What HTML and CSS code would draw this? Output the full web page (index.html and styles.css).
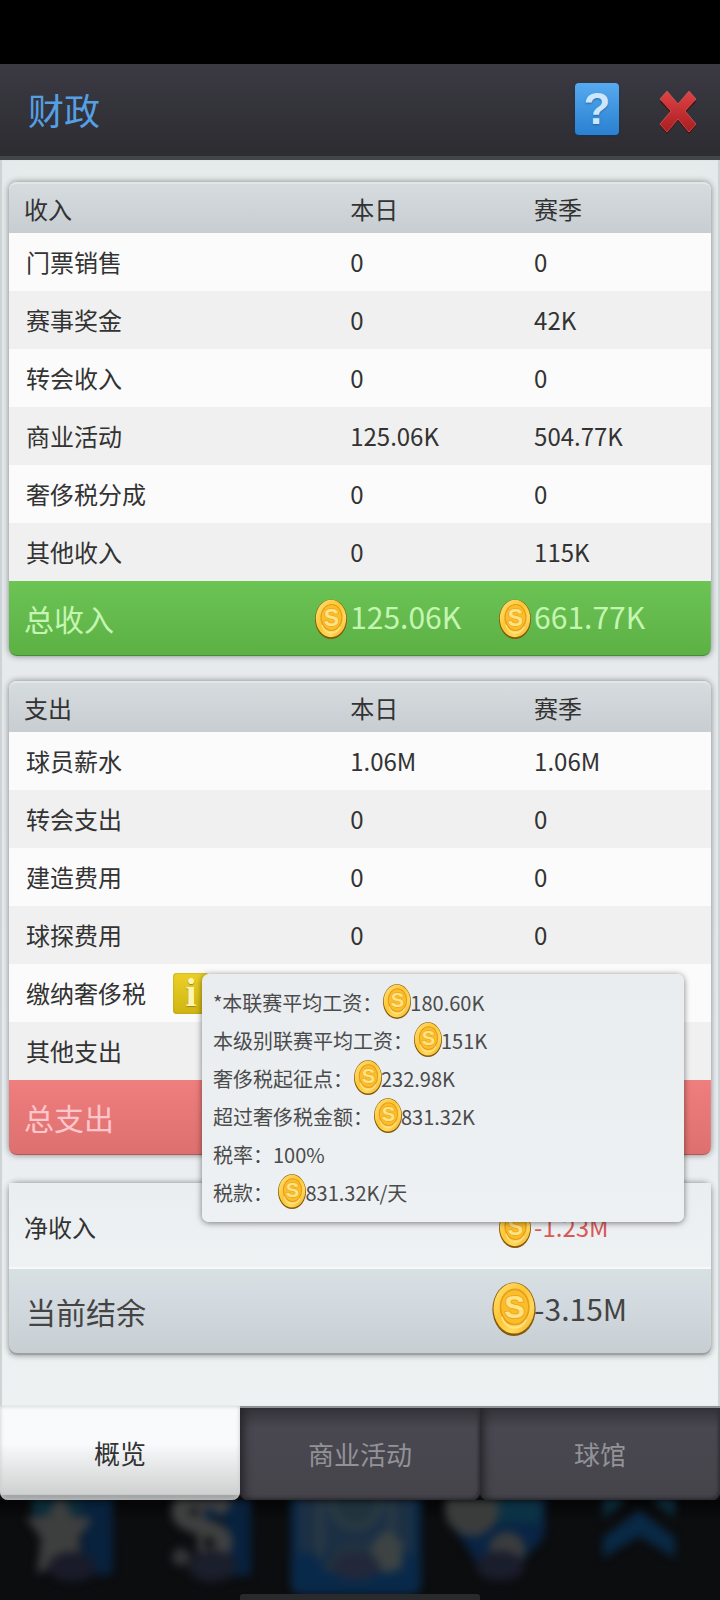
FILE: index.html
```html
<!DOCTYPE html>
<html lang="zh-CN">
<head>
	<meta charset="utf-8">
	<meta name="viewport" content="width=device-width, initial-scale=1">
	<title>财政</title>
	<link rel="stylesheet" href="styles.css">
</head>
<body>
	<!-- shared icons -->
	<svg class="defs" width="0" height="0" aria-hidden="true">
		<defs>
			<linearGradient id="gold" x1="0" y1="0" x2="1" y2="1">
				<stop offset="0" stop-color="#ffe07a"/>
				<stop offset="0.45" stop-color="#fdc632"/>
				<stop offset="0.7" stop-color="#ffd95c"/>
				<stop offset="1" stop-color="#f2a71c"/>
			</linearGradient>
			<linearGradient id="red" x1="0" y1="0" x2="0" y2="1">
				<stop offset="0" stop-color="#e04345"/>
				<stop offset="1" stop-color="#a81d20"/>
			</linearGradient>
			<symbol id="coin" viewBox="0 0 32 40">
				<ellipse cx="16" cy="20.2" rx="16" ry="19.8" fill="#86590a"/>
				<ellipse cx="16" cy="19.5" rx="15.2" ry="18.7" fill="url(#gold)"/>
				<ellipse cx="16.5" cy="18.5" rx="10.5" ry="13" fill="#fcbd2b" stroke="#e59d1c" stroke-width="1.2"/>
				<path d="M7 26a10 12 0 0 0 18 2" fill="none" stroke="#ffe489" stroke-width="1.2"/>
				<text class="coin-letter" x="16.5" y="26.5" text-anchor="middle">S</text>
			</symbol>
		</defs>
	</svg>

	<!-- title bar -->
	<header class="banner">
		<h1>财政</h1>
		<button class="help" type="button" aria-label="帮助">?</button>
		<button class="close" type="button" aria-label="关闭">
			<svg width="38" height="46" viewBox="0 0 38 46">
				<path d="M8 5l11 12L30 5l7 8-11 11 11 13-7 8-11-13L8 45l-7-8 11-13L1 13z" fill="#4e1013"/>
				<path d="M8 2l11 13L30 2l7 8-11 12 11 13-7 8-11-13L8 43l-7-8 11-13L1 10z" fill="url(#red)" stroke="#c9595a" stroke-width="0.8"/>
			</svg>
		</button>
	</header>

	<main class="content">
		<!-- income -->
		<table class="card income">
			<thead>
				<tr><th>收入</th><th>本日</th><th>赛季</th></tr>
			</thead>
			<tbody>
				<tr><td>门票销售</td><td>0</td><td>0</td></tr>
				<tr><td>赛事奖金</td><td>0</td><td>42K</td></tr>
				<tr><td>转会收入</td><td>0</td><td>0</td></tr>
				<tr><td>商业活动</td><td>125.06K</td><td>504.77K</td></tr>
				<tr><td>奢侈税分成</td><td>0</td><td>0</td></tr>
				<tr><td>其他收入</td><td>0</td><td>115K</td></tr>
			</tbody>
			<tfoot>
				<tr>
					<td>总收入</td>
					<td><svg class="coin"><use href="#coin"/></svg>125.06K</td>
					<td><svg class="coin"><use href="#coin"/></svg>661.77K</td>
				</tr>
			</tfoot>
		</table>

		<!-- expenses -->
		<table class="card expense">
			<thead>
				<tr><th>支出</th><th>本日</th><th>赛季</th></tr>
			</thead>
			<tbody>
				<tr><td>球员薪水</td><td>1.06M</td><td>1.06M</td></tr>
				<tr><td>转会支出</td><td>0</td><td>0</td></tr>
				<tr><td>建造费用</td><td>0</td><td>0</td></tr>
				<tr><td>球探费用</td><td>0</td><td>0</td></tr>
				<tr>
					<td>
						<div class="tax">
							缴纳奢侈税
							<button class="info" type="button" aria-label="奢侈税说明" aria-describedby="tax-tip">i</button>
							<div class="tooltip" id="tax-tip" role="tooltip">
								<p>*本联赛平均工资：<svg class="coin"><use href="#coin"/></svg>180.60K</p>
								<p>本级别联赛平均工资：<svg class="coin"><use href="#coin"/></svg>151K</p>
								<p>奢侈税起征点：<svg class="coin"><use href="#coin"/></svg>232.98K</p>
								<p>超过奢侈税金额：<svg class="coin"><use href="#coin"/></svg>831.32K</p>
								<p>税率：100%</p>
								<p>税款： <svg class="coin"><use href="#coin"/></svg>831.32K/天</p>
							</div>
						</div>
					</td>
					<td></td><td></td>
				</tr>
				<tr><td>其他支出</td><td></td><td></td></tr>
			</tbody>
			<tfoot>
				<tr><td>总支出</td><td></td><td></td></tr>
			</tfoot>
		</table>

		<!-- balance -->
		<table class="card balance">
			<tbody>
				<tr class="net">
					<th>净收入</th><td></td>
					<td><svg class="coin"><use href="#coin"/></svg>-1.23M</td>
				</tr>
				<tr class="total">
					<th>当前结余</th><td></td>
					<td><svg class="coin"><use href="#coin"/></svg>-3.15M</td>
				</tr>
			</tbody>
		</table>
	</main>

	<nav class="tabs">
		<button class="tab active" type="button">概览</button>
		<button class="tab" type="button">商业活动</button>
		<button class="tab" type="button">球馆</button>
	</nav>

	<!-- dimmed game menu behind the window -->
	<div class="dock" aria-hidden="true">
		<svg viewBox="0 0 144 100">
			<path d="M32 0h81v70q0 5-5 5H82V20H32z" fill="#08213d"/>
			<path d="M32 0h50v14H32z" fill="#0c2c38"/>
			<path d="M60-6l13 22 20 2-14 20 4 34-22-10-24 12 4-36-15-20 22-3z" fill="#3d3e3e"/>
			<ellipse cx="72" cy="67" rx="24" ry="15" fill="#191b29"/>
		</svg>
		<svg viewBox="0 0 144 100">
			<path d="M60 0h47v72q0 4-4 4H80V20H60z" fill="#08213d"/>
			<path d="M83 10C65-8 34-1 36 13c2 15 42 12 44 28 0 12-12 18-24 14" fill="none" stroke="#3f4040" stroke-width="17"/>
			<path d="M57-5v60" stroke="#3f4040" stroke-width="7"/>
			<circle cx="37" cy="57" r="9" fill="#343538"/>
			<ellipse cx="68" cy="66" rx="24" ry="16" fill="#1b1e2b"/>
		</svg>
		<svg viewBox="0 0 144 100">
			<path d="M3-5h130v88q0 12-12 12H15Q3 95 3 83z" fill="#09294a"/>
			<path d="M10-5h116v58H10z" fill="#1c3044"/>
			<path d="M32-5v65M104-5v65" stroke="#323d43" stroke-width="5"/>
			<circle cx="68" cy="2" r="25" fill="#20343f" stroke="#354044" stroke-width="4"/>
			<path d="M36 62q32-38 64 0v10H36z" fill="#22333e"/>
			<path d="M98 30l16 12v26l-16 5-14-12V44z" fill="#3d4343"/>
			<ellipse cx="68" cy="66" rx="24" ry="14" fill="#22283a"/>
		</svg>
		<svg viewBox="0 0 144 100">
			<path d="M20-5h93v32q0 14-14 24L82 70 52 76 36 48 20 26z" fill="#092444"/>
			<path d="M64-5h45v28H64z" fill="#0b3244"/>
			<circle cx="40" cy="9" r="27" fill="#3a3c3c"/>
			<circle cx="75" cy="50" r="18" fill="#3a3c3d"/>
			<ellipse cx="68" cy="66" rx="24" ry="15" fill="#1a1d2b"/>
		</svg>
		<svg viewBox="0 0 144 100">
			<path d="M27 0h20v4L27 18zM99 0H79v4l20 14z" fill="#0b2c3b"/>
			<path d="M63 10l36 28v20L63 36 27 58V38z" fill="#092945"/>
		</svg>
		<span class="home-bar"></span>
	</div>
</body>
</html>
```
FILE: styles.css
```css
* {
	box-sizing: border-box;
}

body {
	margin: 0;
	padding-top: 64px; /* status bar area */
	min-height: 100vh;
	display: flex;
	flex-direction: column;
	background-color: #000;
	color: #333;
	font-family: "Noto Sans CJK SC", "Noto Sans", sans-serif;
	font-size: 24px;
	overflow-x: hidden;
}

button {
	border: 0;
	padding: 0;
	font-family: inherit;
	cursor: pointer;
}

.defs {
	position: absolute;
}

/* title bar */
.banner {
	height: 96px;
	padding: 0 23px 2px 28px;
	display: flex;
	align-items: center;
	background: linear-gradient(#3b3a43, #2c2c31);
	border-bottom: 4px solid #42464b;
}

.banner h1 {
	flex: 1;
	margin: 0;
	color: #559fe5;
	font-size: 36px;
	font-weight: 400;
	line-height: 48px;
}

.help {
	width: 44px;
	height: 52px;
	margin-right: 40px;
	border-radius: 4px;
	background: linear-gradient(#55aaf0, #2b80d0);
	box-shadow: 0 1px 2px #14345a;
	color: #cbe6fd;
	font-family: "Liberation Sans", sans-serif;
	font-size: 44px;
	font-weight: 700;
	line-height: 52px;
	text-shadow: 0 1px 2px #2465a0;
}

.close {
	width: 38px;
	height: 52px;
	padding-top: 6px;
	background: none;
}

.close svg {
	display: block;
}

/* page area */
.content {
	padding: 22px 9px 51px;
	background: linear-gradient(#e5eaeb, #e6eaed 50%, #edf1f2);
	box-shadow: inset 2px 0 1px #cdd2d5, inset -2px 0 1px #cdd2d5;
}

/* cards */
.card {
	width: 100%;
	margin-bottom: 25px;
	table-layout: fixed;
	border-spacing: 0;
	border-radius: 8px;
	box-shadow: 0 0 6px rgba(0, 0, 0, 0.45);
	line-height: 30px;
}

.card th,
.card td {
	padding: 0;
	font-weight: 400;
	text-align: left;
	white-space: nowrap;
}

.card tr > :nth-child(1) {
	width: 48.6%;
	padding-left: 15px;
}

.card tr > :nth-child(2) {
	width: 26.2%;
}

.card tbody td:first-child {
	padding-left: 17px;
}

.card thead tr {
	height: 51px;
	border-radius: 8px 8px 0 0;
	background: linear-gradient(#d7dcdf, #c7cdd1);
}

.card thead th {
	border-top: 2px solid #e1e6e8;
}

.card thead th:first-child {
	border-top-left-radius: 8px;
}

.card thead th:last-child {
	border-top-right-radius: 8px;
}

.card tbody tr {
	height: 58px;
	background-color: #fbfbfb;
}

.card tbody tr:nth-child(even) {
	background-color: #f0f0f0;
}

.card tfoot tr {
	height: 75px;
	border-radius: 0 0 8px 8px;
	font-size: 30px;
}

.income tfoot tr {
	background: linear-gradient(#6cc455, #5cb044);
	color: #c4f6b2;
}

.expense {
	margin-bottom: 28px;
}

.expense tfoot tr {
	background: linear-gradient(#ef7e7e, #dd706f);
	color: #ffc6cc;
}

.card tfoot td {
	border-bottom: 1px solid rgba(0, 0, 0, 0.2);
}

.card tfoot td:first-child {
	border-bottom-left-radius: 8px;
}

.card tfoot td:last-child {
	border-bottom-right-radius: 8px;
}

/* coin sits to the left of the number column */
.coin {
	width: 32px;
	height: 40px;
	vertical-align: middle;
}

.coin-letter {
	fill: #ffe385;
	stroke: #eda820;
	stroke-width: 1.5px;
	paint-order: stroke;
	font-family: "Liberation Sans", sans-serif;
	font-size: 23px;
	font-weight: 700;
}

.card td > .coin {
	margin: -8px 3px -4px -35px;
}

.balance {
	margin-bottom: 0;
	line-height: 36px;
}

.card .net {
	height: 84px;
	border-radius: 8px 8px 0 0;
	background: linear-gradient(#eaeef1, #eff2f3);
}

.net > * {
	padding-top: 4px;
}

.card .net > * {
	padding-top: 4px;
}

.net td {
	color: #d95858;
}

.card tbody .total {
	height: 88px;
	border-radius: 0 0 8px 8px;
	background: linear-gradient(#d7e0e2, #d2dae0 40%, #c7ced2);
	box-shadow: inset 0 2px #f6f9fa, inset 0 -2px #9aa0a4;
	color: #444;
	font-size: 30px;
}

.card .total > th {
	padding-left: 17px;
}

.card .total td > .coin {
	width: 44px;
	height: 54px;
	margin: -10px -2px -4px -42px;
}

/* luxury tax row */
.tax {
	position: relative;
	display: flex;
	align-items: center;
	gap: 27px;
}

.info {
	width: 36px;
	height: 41px;
	border-radius: 4px;
	background: linear-gradient(#ecd028, #d0b510);
	box-shadow: inset 0 0 2px #a99310;
	color: #fff3b0;
	font-family: "Liberation Serif", serif;
	font-size: 40px;
	font-weight: 700;
	line-height: 40px;
	text-shadow: 0 1px 1px #a08a10;
}

.tooltip {
	position: absolute;
	z-index: 1;
	top: 1px;
	left: 176px;
	width: 482px;
	padding: 10px 11px;
	border-radius: 7px;
	background: linear-gradient(#e9edf0, #eef1f3);
	box-shadow: 0 1px 6px rgba(0, 0, 0, 0.5);
	color: #4b4b4b;
	font-size: 20px;
	line-height: 38px;
}

.tooltip p {
	height: 38px;
	margin: 0;
}

.tooltip .coin {
	width: 28px;
	height: 35px;
	margin: -9px -1px -1px 1px;
}

/* bottom tabs */
.tabs {
	display: grid;
	grid-template-columns: repeat(3, 1fr);
	height: 94px;
	background-color: #0c0d0f;
}

.tab {
	border-top: 2px solid #909194;
	border-radius: 0 0 8px 8px;
	background: linear-gradient(#34333a, #494850 22%, #45444b);
	box-shadow: inset 8px 0 8px -4px #25252a, inset -2px -2px 3px #303036;
	color: #929297;
	font-size: 26px;
	line-height: 36px;
}

.tab.active {
	border-top: 0;
	background: linear-gradient(#f8fafb 40%, #cfd1d1 94%, #a2a5a5 95%);
	box-shadow: inset 0 0 4px #c5c8c9;
	color: #333;
}

/* dimmed menu */
.dock {
	position: relative;
	flex: 1;
	display: grid;
	grid-template-columns: repeat(5, 1fr);
	min-height: 98px;
	overflow: hidden;
	background: linear-gradient(#050506, #0c0d0f 20%, #0b0d0f);
}

.dock svg {
	width: 100%;
	filter: blur(4px);
}

.home-bar {
	position: absolute;
	bottom: 0;
	left: 33.33%;
	width: 33.33%;
	height: 6px;
	border-radius: 3px 3px 0 0;
	background-color: #292a2b;
}
```
